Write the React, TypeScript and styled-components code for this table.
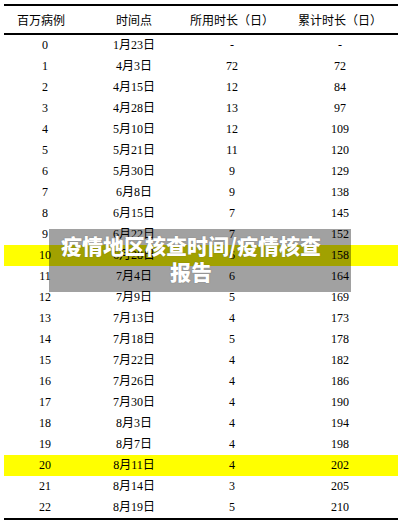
import React from "react";
import styled, { createGlobalStyle } from "styled-components";

const Global = createGlobalStyle`
  html, body { margin: 0; padding: 0; background: #ffffff; }
  body { font-family: "Liberation Serif", "Noto Sans CJK SC", serif; }
`;

const Page = styled.div`
  position: relative;
  width: 402px;
  height: 522px;
  padding: 4px 4px 0 4px;
  box-sizing: border-box;
  overflow: hidden;
`;

const Table = styled.div`
  width: 394px;
  border-top: 2px solid #000;
  border-bottom: 2px solid #000;
`;

const cols = "82px 96px 100px 116px";

const HeaderRow = styled.div`
  display: grid;
  grid-template-columns: ${cols};
  height: 27px;
  align-items: center;
  border-bottom: 2px solid #000;
  font-family: "Noto Sans CJK SC", sans-serif;
  font-size: 12px;
  color: #000;
`;

const HeadCell = styled.div<{ $shift?: number }>`
  text-align: center;
  white-space: nowrap;
  transform: translateX(${(p) => p.$shift ?? 0}px);
`;

const Row = styled.div<{ $highlight?: boolean }>`
  display: grid;
  grid-template-columns: ${cols};
  height: 21px;
  align-items: center;
  background: ${(p) => (p.$highlight ? "#ffff00" : "transparent")};
  font-family: "Liberation Serif", "Noto Sans CJK SC", serif;
  font-size: 12px;
  color: #000;
`;

const Cell = styled.div`
  text-align: center;
  white-space: nowrap;
  line-height: 21px;
`;

const Overlay = styled.div`
  position: absolute;
  left: 49px;
  top: 229px;
  width: 302px;
  height: 63px;
  box-sizing: border-box;
  padding: 3px 28px 0 10px;
  background: rgba(0, 0, 0, 0.37);
  color: #ffffff;
  font-family: "Noto Sans CJK SC", sans-serif;
  font-weight: 900;
  font-size: 21px;
  line-height: 26px;
  text-align: center;
  text-shadow: 0 0 1px rgba(60, 60, 60, 0.6);
`;

const rows: [string, string, string, string, boolean?][] = [
  ["0", "1月23日", "-", "-"],
  ["1", "4月3日", "72", "72"],
  ["2", "4月15日", "12", "84"],
  ["3", "4月28日", "13", "97"],
  ["4", "5月10日", "12", "109"],
  ["5", "5月21日", "11", "120"],
  ["6", "5月30日", "9", "129"],
  ["7", "6月8日", "9", "138"],
  ["8", "6月15日", "7", "145"],
  ["9", "6月22日", "7", "152"],
  ["10", "6月28日", "6", "158", true],
  ["11", "7月4日", "6", "164"],
  ["12", "7月9日", "5", "169"],
  ["13", "7月13日", "4", "173"],
  ["14", "7月18日", "5", "178"],
  ["15", "7月22日", "4", "182"],
  ["16", "7月26日", "4", "186"],
  ["17", "7月30日", "4", "190"],
  ["18", "8月3日", "4", "194"],
  ["19", "8月7日", "4", "198"],
  ["20", "8月11日", "4", "202", true],
  ["21", "8月14日", "3", "205"],
  ["22", "8月19日", "5", "210"],
];

export default function App() {
  return (
    <>
      <Global />
      <Page>
        <Table>
          <HeaderRow>
            <HeadCell $shift={-4}>百万病例</HeadCell>
            <HeadCell>时间点</HeadCell>
            <HeadCell>所用时长（日）</HeadCell>
            <HeadCell>累计时长（日）</HeadCell>
          </HeaderRow>
          {rows.map(([a, b, c, d, hl]) => (
            <Row key={a} $highlight={!!hl}>
              <Cell>{a}</Cell>
              <Cell>{b}</Cell>
              <Cell>{c}</Cell>
              <Cell>{d}</Cell>
            </Row>
          ))}
        </Table>
        <Overlay>疫情地区核查时间/疫情核查报告</Overlay>
      </Page>
    </>
  );
}
